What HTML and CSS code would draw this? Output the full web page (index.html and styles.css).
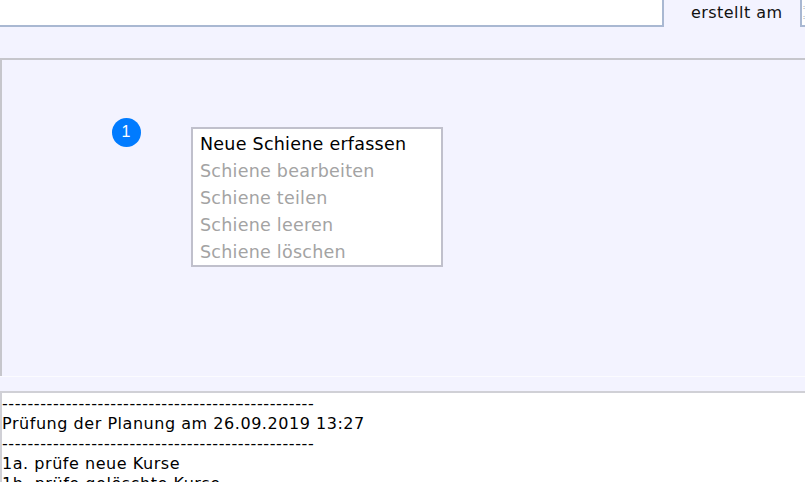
FILE: index.html
```html
<!DOCTYPE html>
<html lang="de">
<head>
<meta charset="utf-8">
<title>Schienen</title>
<link rel="stylesheet" href="styles.css">
</head>
<body>
<div class="toolbar">
  <div class="search-input"></div>
  <span class="toolbar-label">erstellt am</span>
  <div class="date-input">:<br>:</div>
</div>
<div class="canvas">
  <span class="badge">1</span>
  <ul class="menu">
    <li class="menu-item">Neue Schiene erfassen</li>
    <li class="menu-item is-disabled">Schiene bearbeiten</li>
    <li class="menu-item is-disabled">Schiene teilen</li>
    <li class="menu-item is-disabled">Schiene leeren</li>
    <li class="menu-item is-disabled">Schiene löschen</li>
  </ul>
</div>
<div class="divider"></div>
<div class="log">
  <div class="log-line log-rule">-------------------------------------------------</div>
  <div class="log-line">Prüfung der Planung am 26.09.2019 13:27</div>
  <div class="log-line log-rule">-------------------------------------------------</div>
  <div class="log-line">1a. prüfe neue Kurse</div>
  <div class="log-line">1b. prüfe gelöschte Kurse</div>
</div>
</body>
</html>
```
FILE: styles.css
```css
* { box-sizing: border-box; }
html, body { margin: 0; padding: 0; height: 482px; overflow: hidden; }
body {
  background: #f3f3ff;
  font-family: "DejaVu Sans", sans-serif;
  color: #000;
  display: flex;
  flex-direction: column;
}
.toolbar {
  height: 58px;
  flex: none;
  display: flex;
  align-items: flex-start;
}
.search-input {
  width: 664px;
  height: 27px;
  flex: none;
  background: #fff;
  border: solid #a9b8d2;
  border-width: 0 2px 2px 0;
}
.toolbar-label {
  flex: none;
  width: 109px;
  margin: 4px 0 0 27px;
  font-size: 16px;
  letter-spacing: 0.45px;
  line-height: 18px;
  white-space: nowrap;
  color: #111;
}
.date-input {
  flex: 1;
  height: 27px;
  background: #fff;
  border: solid #a9b8d2;
  border-width: 0 0 2px 2px;
  font-size: 6px;
  line-height: 10px;
  padding: 2px 0 0 1px;
  color: #555;
  overflow: hidden;
}
.canvas {
  height: 318px;
  flex: none;
  border: solid #c6c6cc;
  border-width: 2px 0 0 2px;
  padding: 58px 0 0 110px;
  display: flex;
  align-items: flex-start;
}
.badge {
  width: 29px;
  height: 29px;
  flex: none;
  border-radius: 50%;
  background: #007bff;
  color: #fff;
  font-family: "Liberation Sans", sans-serif;
  font-size: 16px;
  line-height: 28px;
  text-align: center;
  padding-right: 1px;
}
.menu {
  list-style: none;
  margin: 9px 0 0 50px;
  padding: 2px 0 0;
  width: 252px;
  height: 140px;
  background: #fff;
  border: 2px solid #c0c0cc;
  font-size: 17.5px;
  letter-spacing: 0.25px;
}
.menu-item {
  height: 27px;
  line-height: 26px;
  padding-left: 7px;
  white-space: nowrap;
}
.is-disabled { color: #a3a3a3; }
.divider {
  height: 17px;
  flex: none;
  border-top: 1px solid #fbfbff;
  border-bottom: 2px solid #d0d0d6;
}
.log {
  flex: 1;
  min-height: 0;
  background: #fff;
  border-left: 2px solid #d0d0d6;
  padding-top: 1px;
  font-size: 16px;
  letter-spacing: 0.54px;
  overflow: hidden;
}
.log-line { height: 20px; line-height: 20px; white-space: nowrap; }
.log-rule { letter-spacing: 0.6px; }
```
